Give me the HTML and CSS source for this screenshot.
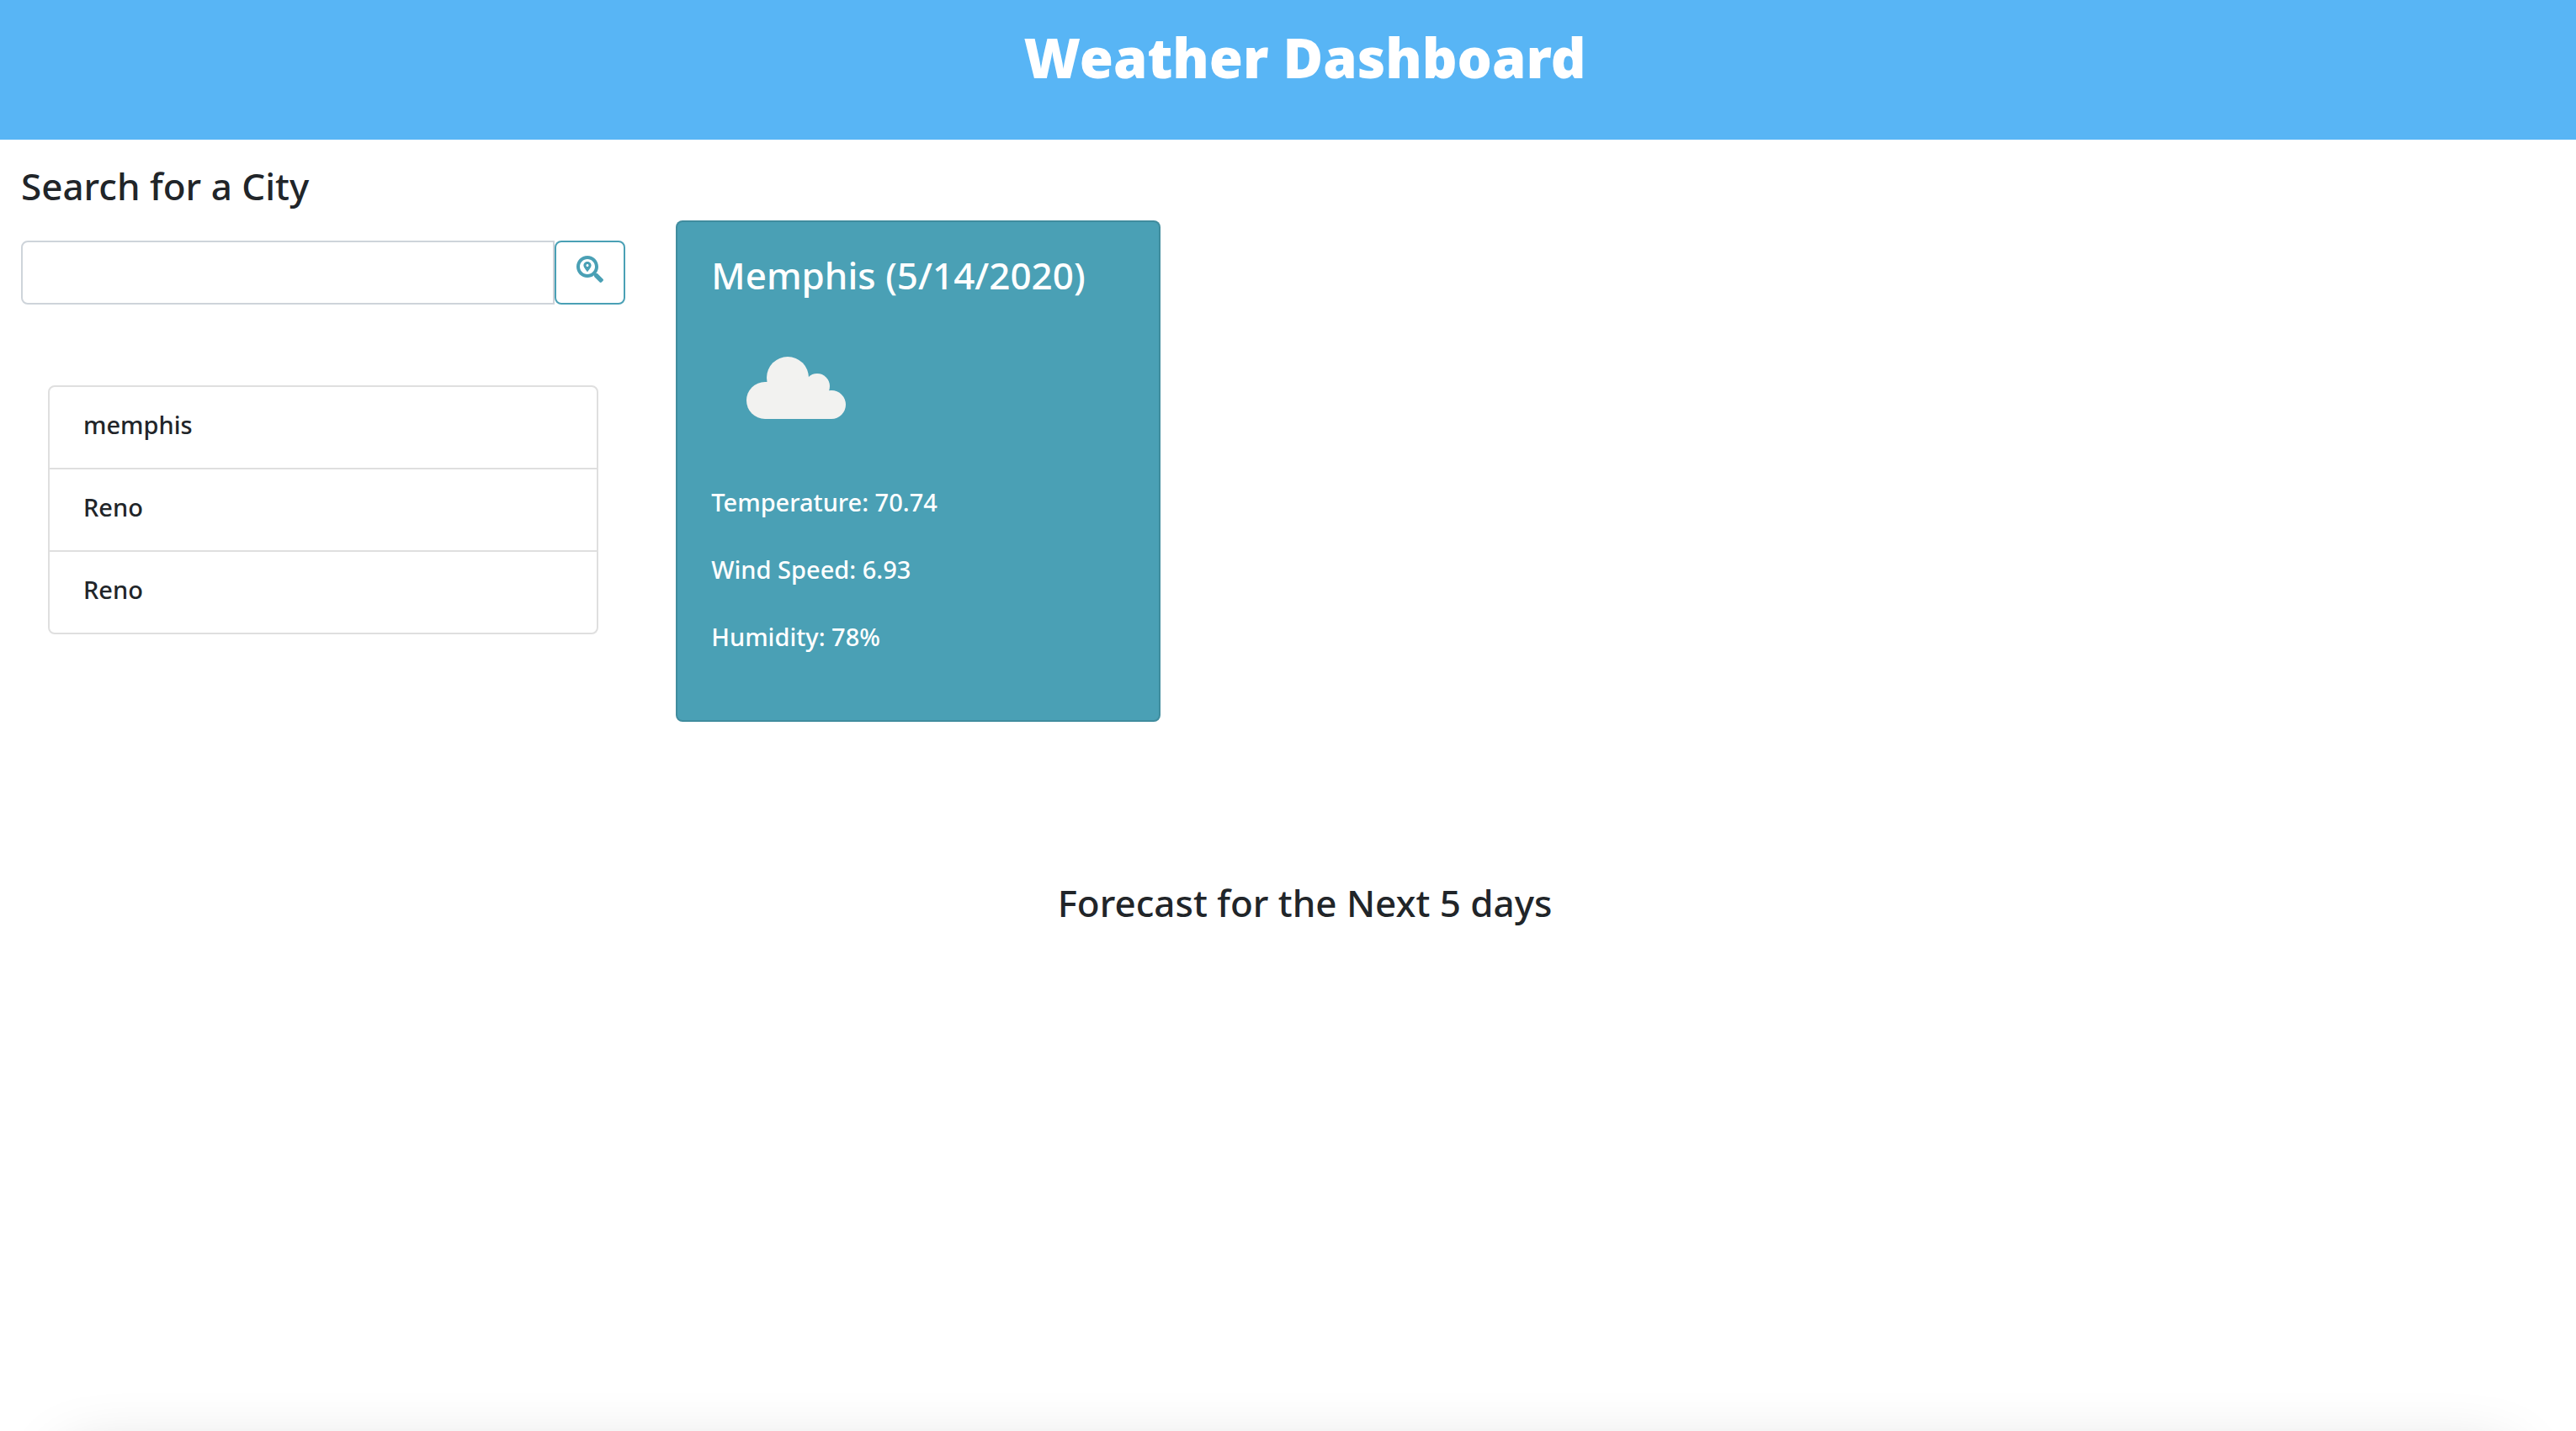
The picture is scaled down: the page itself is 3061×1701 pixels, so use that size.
FILE: index.html
```html
<!DOCTYPE html>
<html lang="en">
<head>
  <meta charset="utf-8">
  <meta name="viewport" content="width=device-width, initial-scale=1">
  <title>Weather Dashboard</title>
  <link rel="stylesheet" href="styles.css">
</head>
<body>
  <div class="page">
    <header class="banner">
      <h1 class="banner-title">Weather Dashboard</h1>
    </header>

    <main class="content">
      <div class="row">
        <aside class="sidebar">
          <form class="search">
            <h2 class="heading"><label for="city">Search for a City</label></h2>
            <div class="input-group">
              <input class="search-input" id="city" type="text">
              <button class="search-button" type="button" aria-label="Search">
                <svg class="search-icon" viewBox="0 0 512 512" aria-hidden="true">
                  <path d="M505.04 442.66l-99.71-99.69c-4.5-4.5-10.6-7-17-7h-16.3c27.6-35.3 44-79.69 44-127.99C416.03 93.09 322.92 0 208.02 0S0 93.09 0 207.98s93.11 207.98 208.02 207.98c48.3 0 92.71-16.4 128.01-44v16.3c0 6.4 2.5 12.5 7 17l99.71 99.69c9.4 9.4 24.6 9.4 33.9 0l28.3-28.3c9.4-9.4 9.4-24.59.1-33.99zm-297.02-90.7c-79.54 0-144-64.34-144-143.98 0-79.53 64.35-143.98 144-143.98 79.54 0 144 64.34 144 143.98 0 79.53-64.35 143.98-144 143.98zm.02-239.96c-40.78 0-73.84 33.05-73.84 73.83 0 32.96 48.26 93.05 66.75 114.86a9.24 9.24 0 0 0 14.18 0c18.49-21.81 66.75-81.89 66.75-114.86 0-40.78-33.06-73.83-73.84-73.83zm0 96c-13.26 0-24-10.75-24-24 0-13.26 10.75-24 24-24s24 10.74 24 24c0 13.25-10.75 24-24 24z"/>
                </svg>
              </button>
            </div>
          </form>
          <ul class="history">
            <li class="history-item">memphis</li>
            <li class="history-item">Reno</li>
            <li class="history-item">Reno</li>
          </ul>
        </aside>

        <section class="card">
          <h2 class="heading">Memphis (5/14/2020)</h2>
          <svg class="weather-icon" viewBox="0 0 200 200" role="img" aria-label="Cloudy">
            <g transform="translate(42 63)">
              <circle cx="22" cy="52" r="22"/>
              <circle cx="49" cy="25" r="25"/>
              <circle cx="84" cy="35" r="15"/>
              <circle cx="101" cy="57" r="17"/>
              <path d="M22 30h27l35-6 14 16 3 34H22z"/>
            </g>
          </svg>
          <p class="reading">Temperature: 70.74</p>
          <p class="reading">Wind Speed: 6.93</p>
          <p class="reading">Humidity: 78%</p>
        </section>
      </div>

      <section class="forecast">
        <h2 class="heading">Forecast for the Next 5 days</h2>
      </section>
    </main>

    <footer class="footer"></footer>
  </div>
</body>
</html>
```

FILE: styles.css
```css
*,
*::before,
*::after {
  box-sizing: border-box;
}

body {
  margin: 0;
  background: #fff;
  color: #212529;
  font-family: "Noto Sans", "Open Sans", sans-serif;
  font-size: 29px;
  font-weight: 500;
  line-height: 48px;
}

.page {
  display: flex;
  flex-direction: column;
  min-height: 100vh;
  overflow: hidden;
}

.banner {
  padding: 28px 0 58px 40px;
  background: #58b5f5;
  color: #fff;
  text-align: center;
}

.banner-title {
  margin: 0;
  font-size: 65px;
  font-weight: 900;
  line-height: 80px;
}

.content {
  flex: 1;
}

.heading {
  margin: 0;
  font-size: 44px;
  font-weight: 500;
  line-height: 52px;
}

.row {
  display: flex;
  align-items: flex-start;
}

.sidebar {
  flex: 0 0 25%;
  padding: 29px 22px 0 25px;
}

.input-group {
  display: flex;
  height: 76px;
  margin-top: 39px;
}

.search-input {
  flex: 1;
  min-width: 0;
  padding: 12px 24px;
  border: 2px solid #ced4da;
  border-radius: 8px 0 0 8px;
  background: #fff;
  color: #495057;
  font: inherit;
}

.search-button {
  display: flex;
  align-items: center;
  justify-content: center;
  width: 84px;
  padding: 0 0 8px;
  border: 2px solid #4aa0b5;
  border-radius: 8px;
  background: transparent;
  color: #4aa0b5;
}

.search-icon {
  width: 32px;
  height: 32px;
  fill: currentColor;
}

.history {
  margin: 96px 32px 0;
  padding: 0;
  border: 2px solid #dfdfdf;
  border-radius: 8px;
  list-style: none;
}

.history-item {
  padding: 21px 40px 27px;
}

.history-item + .history-item {
  border-top: 2px solid #dfdfdf;
}

.card {
  width: 576px;
  margin: 96px 0 0 38px;
  padding: 37px 40px 75px;
  border: 2px solid rgba(0, 0, 0, 0.125);
  border-radius: 8px;
  background: #4aa0b5;
  color: #fff;
}

.weather-icon {
  display: block;
  width: 200px;
  height: 200px;
  margin: 8px 0 12px;
  fill: #f2f2f0;
}

.reading {
  margin: 0;
}

.reading + .reading {
  margin-top: 32px;
}

.forecast {
  padding: 189px 0 0 40px;
  text-align: center;
}

.footer {
  height: 96px;
  margin: 0 80px -96px;
  box-shadow: 0 32px 80px rgba(0, 0, 0, 0.2);
}
```
